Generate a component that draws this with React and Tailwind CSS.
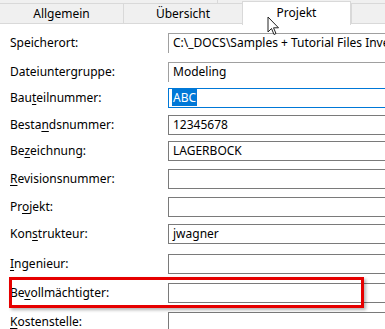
import { useState } from "react";

const rows = [
  { label: ["Speicherort:"], value: "C:\\_DOCS\\Samples + Tutorial Files Inventor", mt: "mt-[9px]", kind: "ro" },
  { label: ["Dateiuntergruppe:"], value: "Modeling", mt: "mt-[9px]", kind: "ro" },
  { label: ["Bau", "t", "eilnummer:"], value: "ABC", mt: "mt-[6px]", kind: "sel" },
  { label: ["Besta", "n", "dsnummer:"], value: "12345678", mt: "mt-[7px]" },
  { label: ["Be", "z", "eichnung:"], value: "LAGERBOCK", mt: "mt-[6px]" },
  { label: ["", "R", "evisionsnummer:"], value: "", mt: "mt-[8px]" },
  { label: ["Pr", "o", "jekt:"], value: "", mt: "mt-[8px]" },
  { label: ["Kon", "s", "trukteur:"], value: "jwagner", mt: "mt-[7px]" },
  { label: ["", "I", "ngenieur:"], value: "", mt: "mt-[10px]" },
  { label: ["Be", "v", "ollmächtigter:"], value: "", mt: "mt-[9px]" },
  { label: ["", "K", "ostenstelle:"], value: "", mt: "mt-[9px]" },
];

function Label({ parts }) {
  if (parts.length === 1) return <span>{parts[0]}</span>;
  return (
    <span>
      {parts[0]}
      <span className="underline underline-offset-2">{parts[1]}</span>
      {parts[2]}
    </span>
  );
}

function Field({ row }) {
  if (row.kind === "ro") {
    return (
      <div className="shrink-0 h-[20px] w-[240px] border-t border-l border-[#a0a0a0] pl-[4px] leading-[18px] whitespace-nowrap overflow-hidden">
        {row.value}
      </div>
    );
  }
  if (row.kind === "sel") {
    return (
      <div className="shrink-0 h-[20px] w-[240px] border border-[#0078d7] pl-[3px] leading-[18px] whitespace-nowrap">
        <span className="bg-[#0078d7] text-white px-[1px]">{row.value}</span>
      </div>
    );
  }
  return (
    <div className="shrink-0 h-[20px] w-[240px] border border-[#7a7a7a] pl-[4px] leading-[18px] whitespace-nowrap">
      {row.value}
    </div>
  );
}

export default function App() {
  const [active] = useState("Projekt");

  return (
    <div
      className="relative w-[385px] h-[329px] overflow-hidden bg-white text-[12px] text-black"
      style={{ fontFamily: '"Noto Sans", "Open Sans", sans-serif' }}
    >
      {/* upper tab row (cut off) */}
      <div className="h-[4px] bg-[#f0f0f0] border-b border-[#d9d9d9] flex">
        <div className="w-[218px] border-r border-[#d9d9d9]" />
        <div className="flex-1" />
      </div>

      {/* tab row */}
      <div className="relative h-[20px] bg-[#f0f0f0] border-b border-[#d9d9d9] flex">
        <div className="shrink-0 w-[124px] border-r border-[#d9d9d9] flex items-center justify-center leading-none pt-[1px]">
          Allgemein
        </div>
        <div className="shrink-0 w-[118px] flex items-center justify-center leading-none pt-[1px]">
          Übersicht
        </div>
        <div className="shrink-0 w-[109px] -mt-[3px] h-[24px] bg-white border border-b-0 border-[#d9d9d9] flex items-center justify-center leading-none pb-[2px]">
          {active}
        </div>
        <div className="flex-1 border-l border-[#d9d9d9]" />
      </div>

      {/* form rows */}
      <div className="flex flex-col">
        {rows.map((row, i) => (
          <div key={i} className={"flex items-center " + row.mt}>
            <div className="shrink-0 w-[168px] pl-[10px] whitespace-nowrap">
              <Label parts={row.label} />
            </div>
            <Field row={row} />
          </div>
        ))}
      </div>

      {/* red highlight */}
      <div className="absolute left-[9px] top-[277px] w-[355px] h-[31px] border-[3px] border-[#e60000] shadow-[2px_2px_3px_rgba(0,0,0,0.3)]" />

      {/* mouse cursor */}
      <svg className="absolute left-[267px] top-[16px]" width="13" height="20" viewBox="0 0 13 20">
        <path d="M1 1 L1 16 L4.5 12.5 L7 18.5 L9 17.5 L6.5 11.8 L11.5 11.8 Z" fill="white" stroke="#222" strokeWidth="1" strokeLinejoin="round" />
      </svg>
    </div>
  );
}
